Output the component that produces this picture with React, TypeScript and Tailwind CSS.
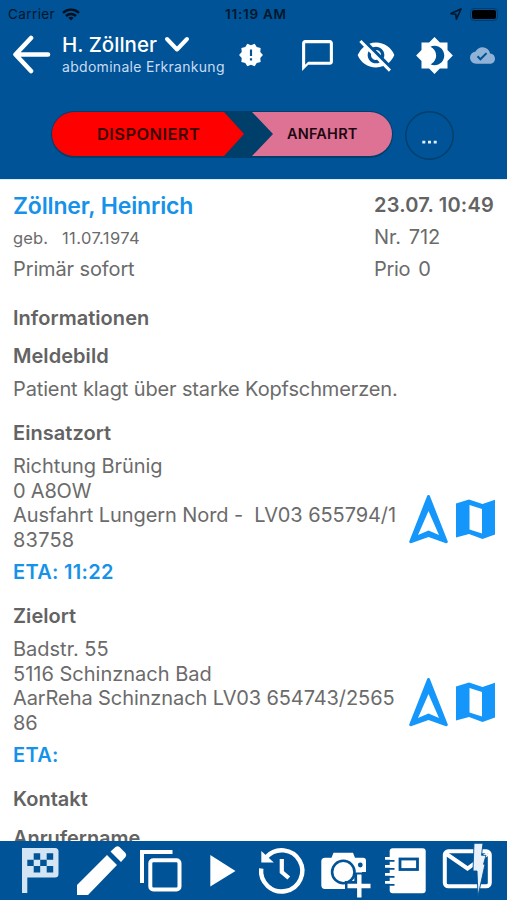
import React from "react";
import {
  MdBrightness4,
  MdChatBubbleOutline,
  MdCloudDone,
  MdNewReleases,
  MdVisibilityOff,
} from "react-icons/md";

function StatusBar() {
  return (
    <div className="flex h-7 items-center text-[13.500px] text-[#00172b]">
      <div className="flex w-[225px] items-center pl-2">
        <span className="w-[54px] tracking-[0.400px]">Carrier</span>
        <svg width="18" height="13" viewBox="0 0 18 13" fill="none" stroke="#00101f" strokeWidth="2.4">
          <path d="M1 4.8C5.5 .6 12.5 .6 17 4.8" />
          <path d="M4 8c2.8-2.6 7.2-2.6 10 0" />
          <path d="M6.3 9.8c1.600-1.3 3.8-1.3 5.400 0L9 12.6z" fill="#00101f" stroke="none" />
        </svg>
      </div>
      <span className="w-[225px] font-semibold tracking-[0.750px]">11:19 AM</span>
      <div className="flex items-center gap-[8px]">
        <svg width="12" height="12" viewBox="0 0 12 12" fill="none" stroke="#00172b" strokeWidth="1.6" strokeLinejoin="round">
          <path d="M11 1 1 5.600l4.800.7.6 4.800z" />
        </svg>
        <div className="h-[13px] w-[28px] rounded-[4px] border border-[#003c70] p-[1px]">
          <div className="h-full rounded-[2px] bg-black" />
        </div>
      </div>
    </div>
  );
}

function TitleBar() {
  return (
    <div className="flex h-[54px] items-center text-white">
      <svg className="ml-[12px] shrink-0" width="40" height="40" viewBox="0 0 40 40" fill="none" stroke="white" strokeWidth="4.6" strokeLinecap="round" strokeLinejoin="round">
        <path d="M19 3 3.5 19.500 19 36M4 19.500h32" />
      </svg>
      <div className="ml-[10px] w-[176px] shrink-0">
        <div className="flex h-[23px] items-center">
          <span className="w-[102px] whitespace-nowrap text-[20.500px] font-medium tracking-[0px]">H. Zöllner</span>
          <svg width="26" height="18" viewBox="0 0 26 18" fill="none" stroke="white" strokeWidth="4" strokeLinecap="round" strokeLinejoin="round">
            <path d="M3 3l10 10.500L23 3" />
          </svg>
        </div>
        <div className="h-[20px] whitespace-nowrap text-[14px] leading-[19px] tracking-[0.300px] text-[#c9dcf4]">abdominale Erkrankung</div>
      </div>
      <MdNewReleases className="shrink-0" size={26} />
      <MdChatBubbleOutline className="ml-[35px] shrink-0" size={37} />
      <MdVisibilityOff className="ml-[20px] shrink-0" size={40} />
      <MdBrightness4 className="ml-[19px] shrink-0" size={39} />
      <MdCloudDone className="ml-[16px] shrink-0 text-[#8fb2d6]" size={25} />
    </div>
  );
}

function StatusSteps() {
  return (
    <div className="flex h-[97px] pt-[29px] pl-[51px]">
      <div className="flex h-[47px] w-[342px] justify-between rounded-full bg-[#003f69] px-[1px] pt-px pb-[2px]">
        <div className="flex w-[192px] items-center rounded-l-full bg-[#ff0000] pl-[45px] text-[16.500px] font-semibold tracking-[0.400px] text-[#3d0000] [clip-path:polygon(0_0,172px_0,192px_50%,172px_100%,0_100%)]">
          DISPONIERT
        </div>
        <div className="flex w-[140px] items-center rounded-r-full bg-[#dd7294] pl-[35px] text-[14.500px] font-semibold tracking-[0.2px] text-[#210810] [clip-path:polygon(0_0,100%_0,100%_100%,0_100%,21px_50%)]">
          ANFAHRT
        </div>
      </div>
      <svg className="ml-[12px]" width="49" height="49" viewBox="0 0 49 49">
        <circle cx="24.500" cy="24.500" r="23.700" fill="none" stroke="#003f6e" strokeWidth="1.500" />
        <path d="M17.300 29.700h3v2.800h-3zM23 29.700h3v2.800h-3zM28.700 29.700h3v2.800h-3z" fill="#e4eefa" />
      </svg>
    </div>
  );
}

function Heading({ children, className = "" }: { children: React.ReactNode; className?: string }) {
  return <h2 className={"h-8 text-[20px] font-semibold leading-8 text-[#636363] " + className}>{children}</h2>;
}

function PlaceIcons() {
  return (
    <div className="flex h-[50px] items-center gap-[8px] text-[#1496fb]">
      <svg width="39" height="49" viewBox="0 0 39 49" fill="currentColor">
        <path fillRule="evenodd" d="M18.200.8q1.300-1.800 2.600 0L38.800 46.500q.2 1.900-1.800 1.700L19.500 42 2 48.200q-2 .2-1.800-1.700zM19.500 16 9 40l10.500-4.500L30 40z" />
      </svg>
      <svg width="40" height="41" viewBox="0 0 40 41" fill="currentColor">
        <path fillRule="evenodd" d="M0 4.500 13 .5 26.500 5 39 .8V35.500L26.500 40 13 35 0 38.500zM13.500 6v24.500l12.500 4V10z" />
      </svg>
    </div>
  );
}

function Place({ title, lines, eta }: { title: string; lines: { text: string; className: string }[]; eta: string }) {
  return (
    <section className="mt-[12px]">
      <Heading className="tracking-[0.050px]">{title}</Heading>
      <div className="mt-[5px] flex h-[99px]">
        <div className="w-[396px] shrink-0 text-[20px] leading-[24.700px]">
          {lines.map((l) => (
            <div key={l.text} className={"whitespace-pre " + l.className}>
              {l.text}
            </div>
          ))}
        </div>
        <div className="pt-[40px]">
          <PlaceIcons />
        </div>
      </div>
      <div className="mt-[3px] h-8 text-[20px] font-semibold leading-8 tracking-[0.300px] text-[#1692e8]">{eta}</div>
    </section>
  );
}

function Toolbar() {
  return (
    <footer className="h-[59px] shrink-0 bg-[#005396]">
      <svg width="507" height="59" viewBox="0 841 507 59" fill="none">
        <path d="M22 848h33q3.500 0 3.500 3.500V874q0 3.500-3.500 3.500H27.300V893H22z" fill="#d3e4f4" />
        <path d="M33.700 853.300h6.500v6.400h-6.500zM46.700 853.300h6.500v6.400h-6.500zM27.300 859.700h6.400v6.300h-6.400zM40.200 859.700h6.500v6.300h-6.500zM33.700 866h6.500v6.400h-6.500zM46.700 866h6.500v6.400h-6.500z" fill="#005396" />
        <path d="M77 885v10h11l29-30-10-10zM110.500 851.500l5-4.500q2-1.500 4 0l6 6q1.500 2 0 4l-4.500 5z" fill="white" />
        <path d="M142 883v-31h30.500" stroke="white" strokeWidth="4" />
        <rect x="150.300" y="860.300" width="29.200" height="29.200" rx="3" stroke="white" strokeWidth="4" />
        <path d="M210.300 855v31.500L235.500 871z" fill="white" />
        <path d="M261.200 868.500a20.600 20.600 0 1 0 5.200-11.500" stroke="white" strokeWidth="4.400" />
        <path d="M261.300 851v11.500h12.500z" fill="white" />
        <path d="M281.800 859v13l7 6" stroke="white" strokeWidth="4.200" />
        <path d="M325 857.700h6.500l2-5h19.500l2 5h8q3 0 3 3V872h-4v17h-37q-3.700 0-3.700-3.700v-24q0-3.600 3.700-3.600z" fill="white" />
        <circle cx="343.300" cy="872" r="11.200" stroke="#005396" strokeWidth="2.600" />
        <circle cx="360.300" cy="865" r="2.400" fill="#005396" />
        <path d="M359.300 872.500v26M345 886h26" stroke="#005396" strokeWidth="10" />
        <path d="M359.300 874.500v23M347.500 886h23" stroke="white" strokeWidth="4.400" />
        <rect x="389.700" y="848.200" width="36" height="45" rx="3" fill="white" />
        <path d="M389 860.800h5.500M389 868.800h5.500M389 876.800h5.500M389 884.800h5.500" stroke="#005396" strokeWidth="1.800" />
        <path d="M385 858.400h6M385 866.300h6M385 874.300h6M385 882.300h6" stroke="white" strokeWidth="2.800" />
        <rect x="400" y="859" width="17.500" height="10.500" stroke="#005396" strokeWidth="2.800" />
        <rect x="444.800" y="851.300" width="45" height="35" rx="3.500" stroke="white" strokeWidth="4" />
        <path d="M446.500 854l21 14.500 20-14.500" stroke="white" strokeWidth="4" />
        <path d="M474 843.300h9l-1.500 12h4.500l-2.500 9h1.500L478 896l-1-25h-4z" fill="#eaf1f9" stroke="#005396" strokeWidth=".9" />
      </svg>
    </footer>
  );
}

export default function App() {
  return (
    <div className="flex h-[900px] w-[507px] flex-col overflow-hidden bg-white font-[Inter,'Liberation_Sans',sans-serif] text-[#6b6b6b]">
      <header className="h-[179px] shrink-0 bg-[#005396]">
        <StatusBar />
        <TitleBar />
        <StatusSteps />
      </header>
      <main className="min-h-0 flex-1 overflow-hidden border-t border-[#d9eefb] pl-[13px] pt-[10px] text-[20px] leading-8">
        <div className="flex h-24">
          <div className="w-[361px]">
            <div className="h-[33px] text-[23px] leading-[33px] font-semibold tracking-[-0.150px] text-[#1692e8]">Zöllner, Heinrich</div>
            <div className="flex h-[31px] gap-[14px] text-[16.500px] leading-[31px]">
              <span className="tracking-[0.100px]">geb.</span>
              <span className="tracking-[0.400px]">11.07.1974</span>
            </div>
            <div className="h-[31px] leading-[31px] tracking-[-0.120px]">Primär sofort</div>
          </div>
          <div className="-mt-px whitespace-nowrap">
            <div className="h-8 font-semibold tracking-[0.200px] text-[#636363]">23.07. 10:49</div>
            <div className="flex h-8 gap-[8px] tracking-[-0.1px]"><span>Nr.</span><span>712</span></div>
            <div className="flex h-8 gap-[8px] tracking-[-0.3px]"><span>Prio</span><span>0</span></div>
          </div>
        </div>
        <Heading className="mt-[16px] tracking-[0.050px]">Informationen</Heading>
        <Heading className="mt-[6px] tracking-[0.050px]">Meldebild</Heading>
        <div className="mt-px h-8 whitespace-nowrap tracking-[-0.130px]">Patient klagt über starke Kopfschmerzen.</div>
        <Place
          title="Einsatzort"
          lines={[
            { text: "Richtung Brünig", className: "tracking-[-0.070px]" },
            { text: "0 A8OW", className: "tracking-[-0.2px]" },
            { text: "Ausfahrt Lungern Nord -  LV03 655794/1", className: "tracking-[-0.070px]" },
            { text: "83758", className: "tracking-[0.200px]" },
          ]}
          eta="ETA: 11:22"
        />
        <Place
          title="Zielort"
          lines={[
            { text: "Badstr. 55", className: "tracking-[0px]" },
            { text: "5116 Schinznach Bad", className: "tracking-[0px]" },
            { text: "AarReha Schinznach LV03 654743/2565", className: "tracking-[-0.090px]" },
            { text: "86", className: "tracking-[0px]" },
          ]}
          eta="ETA:"
        />
        <Heading className="mt-[12px] tracking-[0px]">Kontakt</Heading>
        <Heading className="mt-[7px] tracking-[-0.050px]">Anrufername</Heading>
      </main>
      <Toolbar />
    </div>
  );
}
